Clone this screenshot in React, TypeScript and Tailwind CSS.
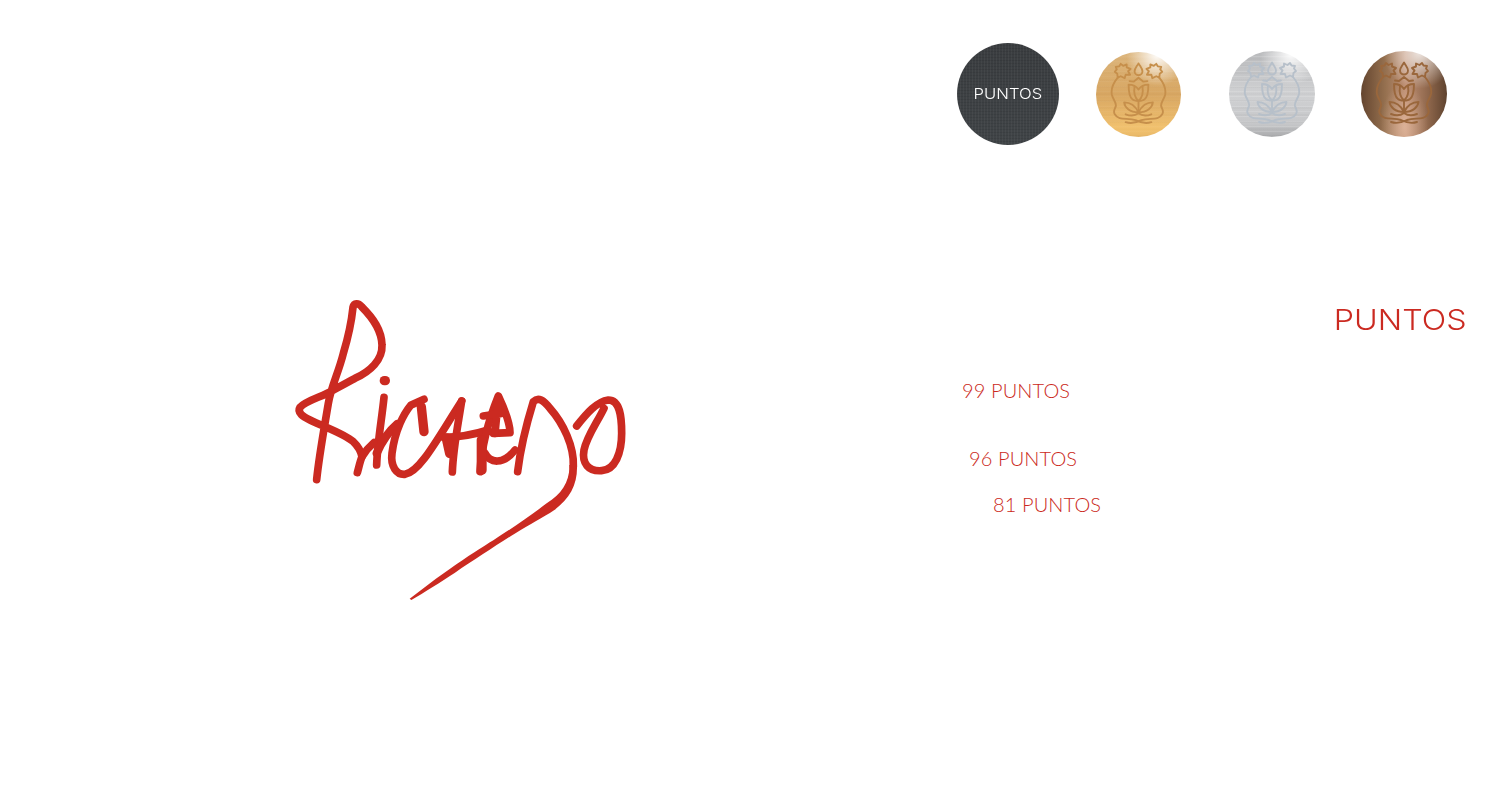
import React from "react";

function Emblem({ color, width = 1.9 }: { color: string; width?: number }) {
  const maple = "M-7 -5 L-3.5 -5.5 L-2 -8 L0.5 -6 L4 -7.5 L4 -4.5 L8 -3 L5.5 -0.5 L7.5 3 L3 3 L2 6.5 L-2 4.5 L-5 6 L-5.5 2 L-8 0 L-6 -2.5 Z";
  return (
    <svg viewBox="0 0 86 86" className="absolute inset-0 w-full h-full blur-[0.3px]" fill="none" stroke={color} strokeWidth={width} strokeLinecap="round" strokeLinejoin="round">
      <path d={maple} transform="translate(27 20)" />
      <path d={maple} transform="translate(59 20) scale(-1 1)" />
      <path d="M43 11.5 C41 15 39 17 39 19.5 C39 22 41 23.5 43 23.5 C45 23.5 47 22 47 19.5 C47 17 45 15 43 11.5 Z" />
      <path d="M34 29.5 L38 30 L43 26 L48 30 L52 29.5" />
      <path d="M33 33 C33 40 34 46 37 48 C39 50 47 50 49 48 C52 46 53 40 53 33 C49 33 45 35 43 38 C41 35 37 33 33 33 Z" />
      <path d="M39 35 C38 41 39 46 43 49.5 M47 35 C48 41 47 46 43 49.5" />
      <path d="M43 49.5 L43 61" />
      <path d="M43 61 C40 55 35 51 28.5 51 C29 56 34 61 43 61 C52 61 57 56 57.5 51 C51 51 46 55 43 61 Z" />
      <path d="M30 63 C35 65 39 65 43 62 C47 65 51 65 56 63" />
      <path d="M22 26 C17 32 15 37 16 43 C17 48 21 51 20 55 C19 58 17 60 19 63 C23 70 32 66 40 69 C44 71 50 73 56 71" />
      <path d="M64 26 C69 32 71 37 70 43 C69 48 65 51 66 55 C67 58 69 60 67 63 C63 70 54 66 46 69 C42 71 36 73 30 71" />
    </svg>
  );
}

function Signature() {
  return (
    <svg viewBox="0 0 1080 960" className="w-[360px] h-[320px] block" fill="none" stroke="#cb2a21" strokeWidth="23" strokeLinecap="round" strokeLinejoin="round">
      <path d="M110 569 C117 500 130 430 145 340 C153 290 175 250 190 190 C205 140 215 90 219 52 C222 38 235 38 245 50 C280 85 305 120 306 165 C308 210 270 245 225 265 C205 276 180 290 160 300 C130 320 80 330 60 352 C50 368 70 380 90 390 C130 410 190 430 220 455 C238 472 243 485 246 500 C240 515 237 530 232 548" />
      <path d="M313 272 L316 272" strokeWidth="28" />
      <path d="M312 322 C305 390 292 460 290 525" />
      <path d="M246 500 C255 485 268 470 282 458" />
      <path d="M290 490 C305 455 325 425 352 402" strokeWidth="25" />
      <path d="M432 328 L392 346 C372 370 345 420 336 490 C331 530 350 555 375 553 C420 545 470 450 545 333" />
      <path d="M424 350 L432 425" strokeWidth="28" />
      <path d="M545 333 C535 400 520 470 517 546" />
      <path d="M490 442 C530 442 575 436 625 420" />
      <path d="M500 445 L510 490" strokeWidth="30" />
      <path d="M600 545 C604 480 622 400 655 318 C670 350 690 400 690 428 L640 430" />
      <path d="M655 325 L645 430 M610 378 L665 370" />
      <path d="M615 490 C630 520 670 525 705 480" />
      <path d="M605 450 L605 540" strokeWidth="30" />
      <path d="M713 545 C722 470 740 400 760 335 C775 320 790 330 810 355 C850 400 883 470 880 530" />
      <path d="M890 408 C920 370 950 335 985 330 C1020 330 1025 380 1025 430 C1025 490 1005 540 965 542 C925 545 905 520 912 480 C920 440 950 400 972 355" />
      <path stroke="none" fill="#cb2a21" d="M868 525 C870 575 845 612 800 640 C735 690 650 745 597 778 C560 801 500 843 448 881 L389 926 L394 930 C430 909 482 876 525 848 C582 810 650 765 704 731 C750 703 790 682 822 661 C870 625 893 585 891 525 Z" />
    </svg>
  );
}

function Coin({ bg, className, children }: { bg: string; className: string; children?: React.ReactNode }) {
  return <div className={`relative rounded-full overflow-hidden ${className} ${bg}`}>{children}</div>;
}

function Points({ className, children }: { className: string; children: React.ReactNode }) {
  return <div className={`font-['Lato',sans-serif] font-light text-[20px] leading-6 tracking-[0.12px] text-[#cb2a21] whitespace-nowrap ${className}`}>{children}</div>;
}

export default function App() {
  return (
    <div className="w-[1500px] h-[800px] bg-white overflow-hidden">
      <div className="flex items-center pt-[43px] pl-[957px]">
        <Coin
          className="w-[102px] h-[102px] flex items-center justify-center"
          bg="bg-[repeating-linear-gradient(90deg,rgba(255,255,255,0.04)_0_1px,transparent_1px_3px),repeating-linear-gradient(0deg,rgba(0,0,0,0.08)_0_1px,transparent_1px_3px),linear-gradient(180deg,#3a3d40,#404447)]"
        >
          <span className="font-['Inter',sans-serif] font-[350] text-[15px] text-white scale-x-[1.11]">PUNTOS</span>
        </Coin>
        <Coin
          className="w-[85px] h-[85px] ml-[37px]"
          bg="bg-[radial-gradient(circle_at_72%_4%,rgba(255,255,255,0.95)_0,rgba(255,255,255,0)_30%),repeating-linear-gradient(0deg,rgba(255,255,255,0.03)_0_1px,transparent_1px_5px),repeating-linear-gradient(0deg,rgba(120,70,0,0.025)_0_2px,transparent_2px_7px),linear-gradient(180deg,#dcb57c_0%,#d8a763_50%,#f2c26f_90%,#e8b868_100%)]"
        >
          <Emblem color="#c68f4b" />
        </Coin>
        <Coin
          className="w-[86px] h-[86px] ml-[48px]"
          bg="bg-[radial-gradient(circle_at_72%_4%,rgba(255,255,255,0.95)_0,rgba(255,255,255,0)_30%),repeating-linear-gradient(0deg,rgba(255,255,255,0.14)_0_1px,transparent_1px_5px),repeating-linear-gradient(0deg,rgba(90,90,90,0.04)_0_2px,transparent_2px_7px),linear-gradient(180deg,#b9babc_0%,#d0d1d3_50%,#c6c7c9_85%,#a9aaac_100%)]"
        >
          <Emblem color="#b7c0ca" />
        </Coin>
        <Coin
          className="w-[86px] h-[86px] ml-[46px]"
          bg="bg-[radial-gradient(circle_at_68%_2%,rgba(255,255,255,0.8)_0,rgba(255,255,255,0)_35%),radial-gradient(ellipse_at_50%_88%,rgba(240,200,175,0.6)_0,rgba(240,200,175,0)_40%),linear-gradient(90deg,#64452f_0%,#95704f_28%,#bf9074_52%,#8f674c_78%,#5f432f_100%)]"
        >
          <Emblem color="#9a673c" />
        </Coin>
      </div>
      <div className="flex">
        <div className="w-[957px] pt-[145px] pl-[280px]">
          <Signature />
        </div>
        <div className="flex-1 flex flex-col items-start pt-[158px]">
          <div className="self-end mr-[34px] font-['Inter',sans-serif] font-[350] text-[29px] leading-[34px] text-[#cb2a21] scale-x-[1.11] origin-right">PUNTOS</div>
          <Points className="ml-[5px] mt-[41px]">99 PUNTOS</Points>
          <Points className="ml-[12px] mt-[44px]">96 PUNTOS</Points>
          <Points className="ml-[36px] mt-[22px]">81 PUNTOS</Points>
        </div>
      </div>
    </div>
  );
}
